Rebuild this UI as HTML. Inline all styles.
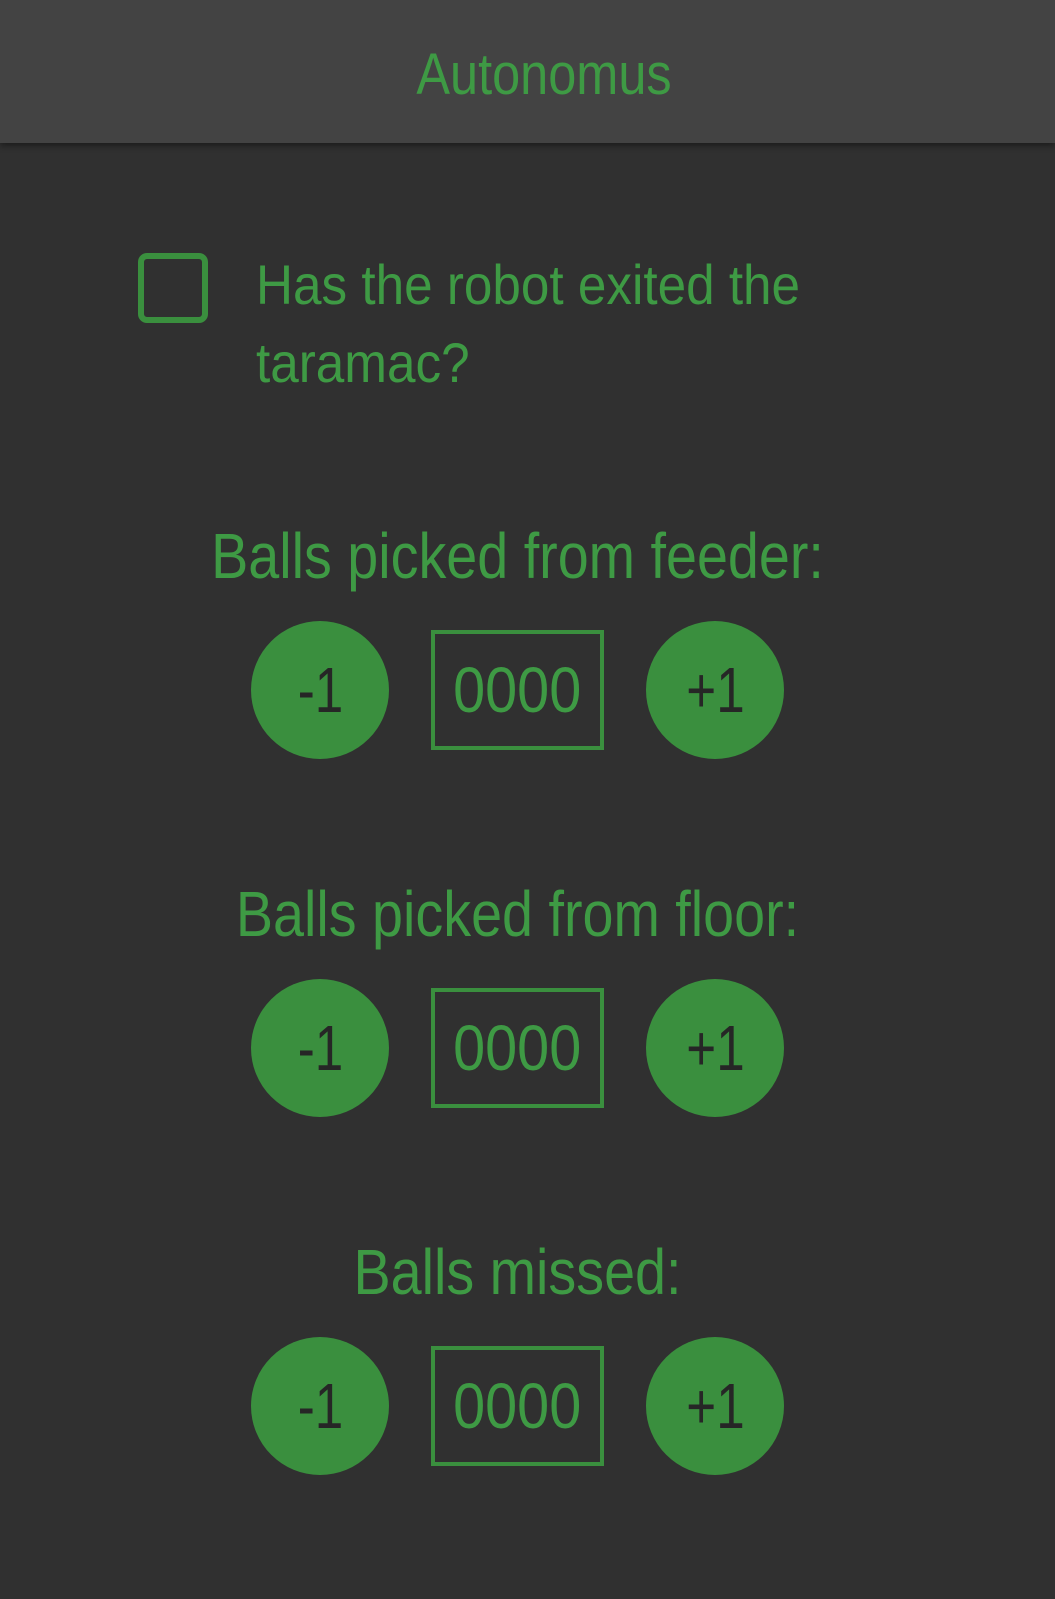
<!DOCTYPE html>
<html><head><style>
body{margin:0;width:1055px;height:1599px;background:#303030;position:relative;overflow:hidden;font-family:"Liberation Sans",sans-serif;color:#3e9a44}
.hdr{position:absolute;left:0;top:0;width:1055px;height:143px;background:#434343;box-shadow:0 3px 6px rgba(0,0,0,.4)}
.t{position:absolute;white-space:nowrap;line-height:1}
.cb{position:absolute;left:138px;top:253px;width:58px;height:58px;border:6px solid #3a8f3e;border-radius:9px;box-sizing:content-box}
.c{position:absolute;width:138px;height:138px;border-radius:50%;background:#3a8f3e;color:#262626;font-size:64px;display:flex;align-items:center;justify-content:center}
.c span{display:inline-block;transform:scaleX(.8)}
.b{position:absolute;left:431px;width:173px;height:120px;box-sizing:border-box;border:4px solid #3a8f3e;font-size:64px;display:flex;align-items:center;justify-content:center;color:#3e9a44}
.b span{display:inline-block;transform:scaleX(.9)}
.h{left:0;width:1055px;text-align:center;font-size:64px;transform:scaleX(.87)}
</style></head><body>
<div class="hdr"></div>
<div class="t" style="left:0;width:1088px;text-align:center;top:46px;font-size:58px;transform:scaleX(.87)">Autonomus</div>
<div class="cb"></div>
<div class="t" style="left:256px;top:257px;font-size:56px;transform:scaleX(.915);transform-origin:0 0">Has the robot exited the</div>
<div class="t" style="left:256px;top:335px;font-size:56px;transform:scaleX(.915);transform-origin:0 0">taramac?</div>

<div class="t h" style="top:524px;left:-10px">Balls picked from feeder:</div>
<div class="c" style="left:251px;top:621px"><span>-1</span></div>
<div class="b" style="top:630px"><span>0000</span></div>
<div class="c" style="left:646px;top:621px"><span>+1</span></div>

<div class="t h" style="top:882px;left:-10px">Balls picked from floor:</div>
<div class="c" style="left:251px;top:979px"><span>-1</span></div>
<div class="b" style="top:988px"><span>0000</span></div>
<div class="c" style="left:646px;top:979px"><span>+1</span></div>

<div class="t h" style="top:1240px;left:-10px">Balls missed:</div>
<div class="c" style="left:251px;top:1337px"><span>-1</span></div>
<div class="b" style="top:1346px"><span>0000</span></div>
<div class="c" style="left:646px;top:1337px"><span>+1</span></div>
</body></html>
